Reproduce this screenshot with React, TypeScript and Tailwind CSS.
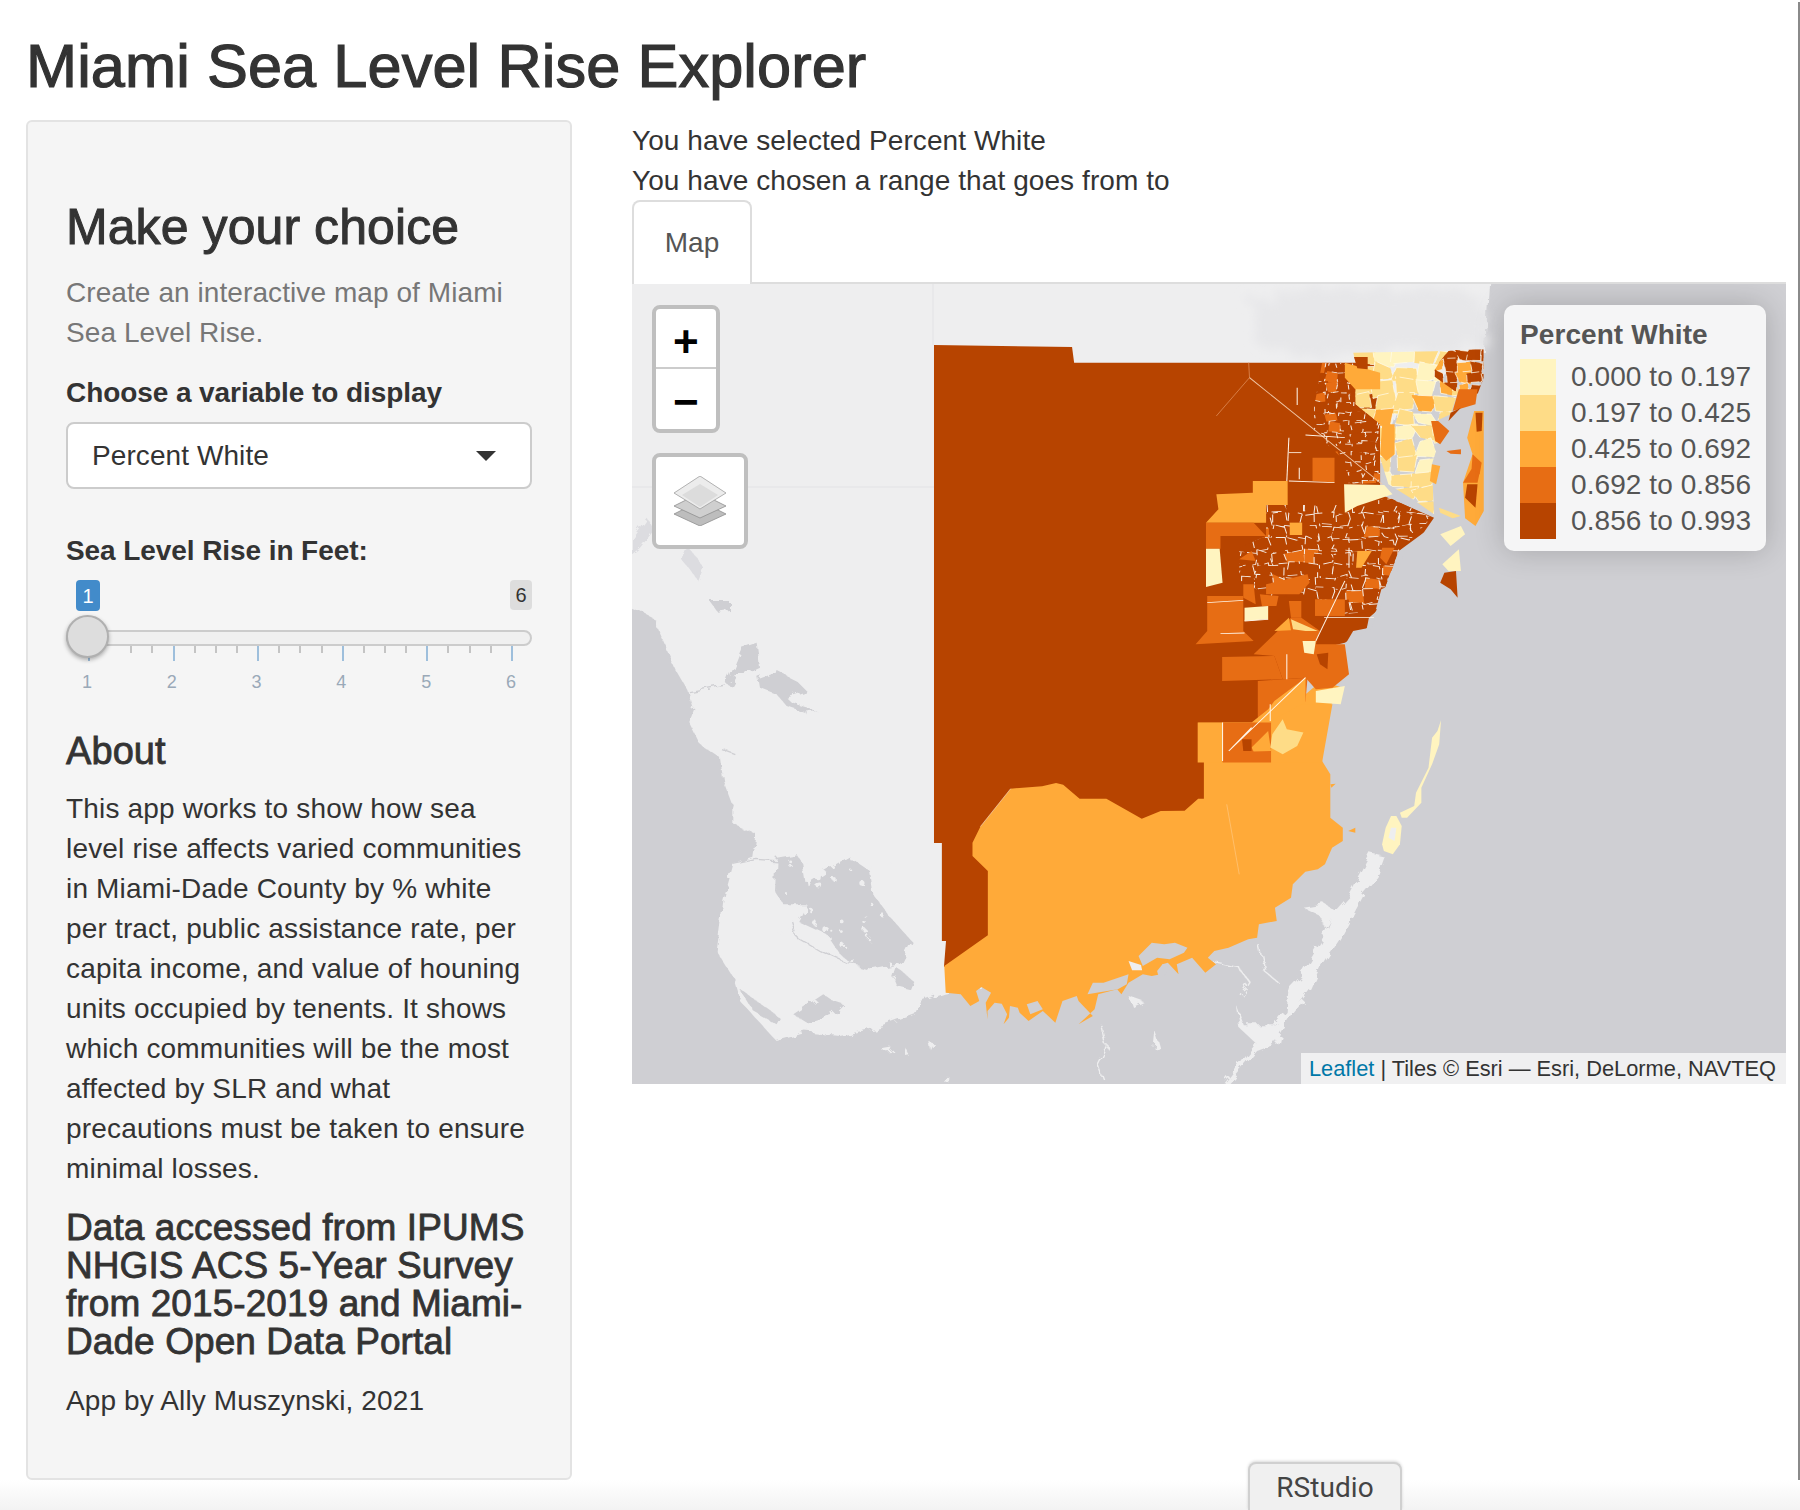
const D = '#b74400';
const M = '#e76d14';
const O = '#ffaa39';
const L = '#fedc87';
const P = '#fff4c0';
const WATER = '#cfcfd3';
const LAND = '#eeeeef';

// small seeded generator so the tract pattern stays the same on every render
let seed = 71;
const rnd = () => {
  seed = (seed * 16807) % 2147483647;
  return seed / 2147483647;
};

interface Tile {
  pts: string;
  fill: string;
}

const makeTiles = (
  x0: number,
  y0: number,
  x1: number,
  y1: number,
  w: number,
  h: number,
  palette: string[],
  wobble = 0.5,
): Tile[] => {
  const out: Tile[] = [];
  const j = () => (rnd() - 0.5) * w * wobble;
  const k = () => (rnd() - 0.5) * h * wobble;
  for (let y = y0; y < y1; y += h) {
    for (let x = x0; x < x1; x += w) {
      out.push({
        pts: `${x + j()},${y + k()} ${x + w + j()},${y + k()} ${x + w + j()},${y + h + k()} ${x + j()},${y + h + k()}`,
        fill: palette[Math.floor(rnd() * palette.length)],
      });
    }
  }
  return out;
};

const yellowTiles = makeTiles(490, 205, 745, 710, 50, 46, [P, L, L, L, P, L, L, O]);
const neTiles = makeTiles(680, 205, 810, 340, 30, 34, [D, D, D, M, O, D, D]);
const urbanTiles = makeTiles(215, 660, 690, 1010, 38, 38, [D, D, D, D, D, D, D, D, D, D, M]);
const northTiles = makeTiles(395, 245, 560, 610, 30, 30, [D, D, D, D, D, D, M]);

// pale flecks that break up the big lake
const lakeFlecks = Array.from({ length: 46 }, () => ({
  cx: 480 + rnd() * 390,
  cy: 770 + rnd() * 330,
  r: 3 + rnd() * 6,
}));

const blocks: [string, string][] = [
  [O, '470,245 555,275 555,325 495,325 470,290'],
  [D, '492,228 525,228 525,265 500,262'],
  [M, '392,530 445,530 445,605 392,600'],
  [O, '160,640 248,635 248,600 332,600 332,672 280,672 280,725 135,725 165,685'],
  [M, '135,725 250,725 280,765 170,765 170,803 135,803'],
  [P, '135,803 168,803 175,905 135,918'],
  [O, '337,725 367,725 367,762 337,762'],
  [P, '468,610 565,612 585,640 500,675 470,695'],
  [M, '138,945 225,945 225,1050 250,1080 110,1090 138,1050'],
  [M, '225,910 250,910 255,970 225,950'],
  [M, '215,835 245,810 255,840'],
  [M, '280,910 380,880 385,905 360,940 280,940'],
  [M, '265,940 310,945 305,975 270,975'],
  [P, '228,980 285,975 285,1015 228,1020'],
  [M, '335,960 365,960 365,1010 340,1010'],
  [M, '398,955 470,955 470,1005 398,1005'],
  [M, '250,1120 300,1060 340,1010 365,1010 410,1050 400,1090 470,1090 480,1180 440,1220 400,1225 375,1190 320,1195 300,1125'],
  [O, '300,1050 335,1010 340,1048'],
  [L, '340,1015 405,1050 375,1050 345,1045'],
  [P, '368,1080 400,1080 395,1120 372,1115'],
  [D, '402,1120 430,1115 428,1165 410,1150'],
  [M, '174,1128 300,1125 320,1195 174,1200'],
  [M, '260,1200 320,1195 380,1190 375,1262 260,1322'],
  [O, '115,1325 245,1325 300,1270 440,1270 415,1445 115,1445'],
  [O, '300,1260 375,1190 375,1265 250,1345'],
  [P, '400,1230 470,1215 460,1270 400,1265'],
  [M, '175,1325 245,1325 292,1325 292,1445 175,1445'],
  [O, '245,1400 285,1350 292,1410 250,1412'],
  [D, '222,1375 245,1375 245,1410 225,1410'],
  [L, '320,1315 330,1345 370,1355 355,1395 320,1420 290,1400 295,1360'],
  [O, '500,810 535,810 510,860 497,860'],
  [M, '560,800 590,800 570,850 555,830'],
  [M, '745,325 790,325 785,370 730,390'],
  [D, '725,395 750,380 720,420'],
  // orange edge of the pale zone along the bay
  [M, '678,420 695,420 722,450 700,490 688,480'],
  [O, '680,550 700,555 690,610 675,600'],
  [O, '560,430 590,430 590,520 570,540 555,520'],
  // the strip across the bay
  [O, '782,390 805,390 805,690 785,735 760,712 755,605 778,520 765,470'],
  [D, '785,395 802,395 800,450 788,452'],
  [M, '778,520 800,545 795,580 775,575'],
  [M, '755,605 775,565 795,575 790,605'],
  [D, '765,610 790,610 785,680 760,650'],
  [M, '715,510 750,505 750,520 725,518'],
  [L, '697,680 750,705 730,712 700,695'],
  [P, '700,760 750,735 760,760 725,795'],
  [P, '705,850 745,805 750,870 720,870'],
  [D, '700,905 710,875 738,870 742,950 725,925'],
];

// little bites out of the coast south of the city
const notches = [
  '600,810 618,800 608,835 590,842',
  '582,870 600,862 585,905 572,900',
  '558,925 575,915 555,985 545,985',
  '528,1010 552,985 532,1048 522,1048',
  '490,1050 530,1040 500,1075 470,1092',
  '660,755 690,742 668,770 640,780',
];

const cracks = [
  'M470 900 L400 1080',
  'M375 1190 L190 1410 L245 1340',
  'M355 320 L355 372',
  'M335 470 L330 600',
  'M335 515 L365 515',
  'M360 560 L360 595',
  'M335 600 L445 605',
  'M375 462 L470 470',
  'M138 965 L225 958',
  'M170 1058 L228 1056',
  'M228 1020 L285 1015',
  'M330 1120 L330 1195',
  'M290 1270 L290 1320',
  'M175 1325 L175 1440',
  'M420 1010 L540 1010',
  'M480 800 L480 860',
];

const MapArt = () => (
  <svg className="absolute inset-0 block h-full w-full" viewBox="632 283 1154 800" preserveAspectRatio="none">
    <rect x="632" y="283" width="1154" height="800" fill={WATER} />
    <defs>
      <filter id="rough" x="-5%" y="-5%" width="110%" height="110%">
        <feTurbulence type="fractalNoise" baseFrequency="0.085" numOctaves="3" seed="4" result="n" />
        <feDisplacementMap in="SourceGraphic" in2="n" scale="11" />
        <feGaussianBlur stdDeviation="0.7" />
      </filter>
      <filter id="relief" x="-10%" y="-10%" width="120%" height="120%">
        <feTurbulence type="fractalNoise" baseFrequency="0.05" numOctaves="3" seed="9" result="n" />
        <feDisplacementMap in="SourceGraphic" in2="n" scale="30" />
        <feGaussianBlur stdDeviation="5" />
      </filter>
      <clipPath id="yellowZone">
        <polygon points="490,215 720,210 700,260 690,290 745,325 725,400 690,420 700,470 680,550 685,700 640,660 575,610 555,530 555,430 495,370 495,330 500,260" />
      </clipPath>
      <clipPath id="neZone">
        <polygon points="720,210 750,205 805,205 805,290 790,340 735,330 690,290 680,280 700,240" />
      </clipPath>
      <clipPath id="urbanZone">
        <polygon points="280,672 450,672 560,640 680,710 600,810 582,870 545,990 470,1000 400,950 300,950 215,900 215,800 280,765" />
      </clipPath>
      <clipPath id="northZone">
        <polygon points="415,245 495,245 495,370 555,430 555,605 480,610 470,540 395,450 395,385" />
      </clipPath>
    </defs>

    {/* land and lakes, on the west side grid */}
    <g filter="url(#rough)">
      <g transform="translate(620 600) scale(0.3333)">
        <polygon
          fill={LAND}
          points="-60,-1050 2610,-1050 2592,-750 2340,-600 2040,300 2040,780 1500,1100 1100,1150 970,1175 900,1200 885,1240 790,1275 660,1305 560,1295 470,1320 360,1200 340,1130 290,1050 310,900 340,790 400,770 410,700 340,670 340,620 310,540 300,470 240,430 205,360 220,320 205,270 170,210 130,120 100,50 60,30 -60,-20"
        />
        <g fill={WATER}>
          <polygon points="270,0 330,0 330,30 295,35" />
          <polygon points="320,250 345,190 365,140 410,125 420,200 400,210 350,220 330,255" />
          <polygon points="415,230 470,210 530,240 560,270 500,290 520,310 590,330 560,335 500,315 470,280 420,260" />
          <polygon points="470,770 530,760 550,790 560,850 620,810 690,770 750,810 760,880 820,960 875,1020 840,1090 760,1105 700,1090 660,1060 620,1000 535,960 560,910 490,910 465,870" />
          <polygon points="820,1130 830,1100 880,1140 870,1165 830,1155" />
          <polygon points="520,1240 610,1180 640,1200 670,1210 640,1240 560,1265" />
          <polygon points="360,1165 480,1250 470,1270 400,1230" />
        </g>
        <g fill="#dcdce0">
          <polygon points="36,-190 80,-250 100,-210 60,-160 36,-140" />
          <polygon points="180,-130 215,-150 250,-100 235,-60 205,-100" />
        </g>
        <g fill={LAND}>
          {lakeFlecks.map((f, i) => (
            <circle key={i} cx={f.cx} cy={f.cy} r={f.r} />
          ))}
        </g>
        <g fill="none" stroke={WATER} strokeWidth="4">
          <path d="M210 275 L320 255" />
          <path d="M340 790 L410 775 L480 780" />
          <path d="M515 960 L530 1010 L600 1050 L680 1085 L740 1090" />
          <path d="M300 440 L340 455" />
        </g>
        <g fill={LAND}>
          <polygon points="785,1345 815,1340 810,1350 790,1352" />
          <polygon points="925,1320 940,1325 930,1345" />
          <polygon points="855,1340 865,1360 855,1362" />
          <polygon points="975,1425 985,1425 985,1445 975,1445" />
        </g>
      </g>

      {/* the keys, on the south grid */}
      <g transform="translate(900 680) scale(0.3571 0.3333)">
        <g fill={LAND}>
          <polygon points="1320,520 1360,530 1340,590 1300,640 1240,760 1180,860 1150,930 1100,1000 1050,1090 1000,1110 960,1160 920,1210 905,1205 960,1130 990,1090 1030,1060 1080,990 1085,920 1130,870 1180,780 1210,700 1260,640" />
          <polygon points="1130,680 1190,670 1220,690 1190,740 1170,700" />
          <polygon points="940,970 960,1030 1050,1030 1080,990 1060,1090 1010,1100 950,1040" />
          <polygon points="640,945 680,960 650,975" />
          <polygon points="715,1050 730,1105 710,1100" />
        </g>
        <g fill="none" stroke={LAND} strokeWidth="4">
          <path d="M565 1035 L578 1095 L552 1150 L565 1190" />
          <path d="M880 845 L950 860 L980 905 L955 945" />
          <path d="M1005 790 L1020 870 L1060 905" />
        </g>
      </g>
    </g>

    <g fill="none" stroke="#e6e6e8" strokeWidth="1.5">
      <path d="M632 486 L934 486" />
      <path d="M933 283 L933 344" />
    </g>

    {/* faint relief north of the county */}
    <g filter="url(#relief)">
      <g transform="translate(1150 280) scale(0.4146 0.3333)" fill="#e7e7e9">
        <polygon points="240,60 400,20 560,30 800,40 810,200 500,215 420,240 260,190" />
      </g>
    </g>

    {/* whole county base, on the north grid */}
    <g transform="translate(1150 280) scale(0.4146 0.3333)">
      <polygon
        fill={D}
        points="-521,192 -188,198 -183,245 415,245 555,245 555,640 685,710 660,755 600,810 582,870 545,990 520,1048 470,1085 420,1100 300,1330 262,1560 100,1900 -400,2050 -497,2058 -492,1980 -502,1980 -502,1686 -521,1686"
      />
    </g>

    <g transform="translate(900 680) scale(0.3571 0.3333)">
      <polygon
        fill={O}
        points="124,855 246,763 246,570 203,525 203,485 225,437 310,323 398,316 437,306 457,311 503,353 578,353 677,413 730,390 797,389 835,353 851,353 851,240 835,232 835,125 1040,125 1180,0 1240,20 1195,90 1182,150 1182,240 1205,280 1205,410 1240,440 1240,480 1210,500 1190,550 1170,565 1135,572 1100,610 1095,650 1050,680 1055,720 1005,730 1000,770 975,775 920,800 880,810 862,830 885,850 855,875 818,830 775,850 780,880 750,845 735,850 730,880 705,885 680,880 640,905 620,940 608,925 555,940 545,985 500,1030 540,1005 500,960 495,945 455,960 435,1025 400,990 360,1020 335,995 330,980 308,975 305,1010 290,1030 300,1000 285,968 265,965 245,990 245,1015 240,965 255,935 228,918 213,930 222,960 197,975 170,940 128,935"
      />
      <polygon fill={WATER} points="668,825 705,785 740,790 770,785 805,800 795,815 755,835 720,830 680,855" />
      <polygon fill={WATER} points="540,905 570,905 640,880 635,910 610,925 525,940" />
      <polygon fill={LAND} points="640,840 675,852 678,868 650,868" />
      <polygon fill={WATER} points="720,870 735,850 750,850 745,880 725,890" />
      <polygon fill={WATER} points="355,970 385,960 400,985 365,1000" />
      <path d="M915 370 L950 580" stroke="#ffc880" strokeWidth="2" fill="none" />
      <path d="M225 437 L310 323" stroke="#fff" strokeWidth="2" fill="none" opacity="0.7" />
      <polygon
        fill={P}
        points="1515,118 1510,190 1490,250 1460,320 1460,365 1420,410 1405,410 1400,395 1440,375 1445,335 1480,260 1490,170 1505,150"
      />
      <polygon fill={P} points="1375,405 1390,405 1405,435 1400,490 1380,520 1355,510 1350,490 1360,440" />
      <polygon fill={LAND} points="1375,440 1390,440 1385,480 1368,470" />
      <polygon fill={O} points="1255,450 1275,440 1275,455" />
      <polygon fill={O} points="1205,310 1220,308 1208,320" />
    </g>

    {/* tracts */}
    <g transform="translate(1150 280) scale(0.4146 0.3333)">
      <g clipPath="url(#yellowZone)">
        {yellowTiles.map((t, i) => (
          <polygon key={i} points={t.pts} fill={t.fill} stroke="#fffbe8" strokeWidth="2" strokeDasharray="34 14" strokeDashoffset={i * 13} />
        ))}
      </g>
      <g clipPath="url(#neZone)">
        {neTiles.map((t, i) => (
          <polygon key={i} points={t.pts} fill={t.fill} stroke="#fff3e0" strokeWidth="2" strokeDasharray="20 12" strokeDashoffset={i * 9} />
        ))}
      </g>
      <g clipPath="url(#urbanZone)">
        {urbanTiles.map((t, i) => (
          <polygon key={i} points={t.pts} fill={t.fill} stroke="#f6ece4" strokeWidth="2.5" strokeDasharray="24 22" strokeDashoffset={i * 13} />
        ))}
      </g>
      <g clipPath="url(#northZone)">
        {northTiles.map((t, i) => (
          <polygon key={i} points={t.pts} fill={t.fill} stroke="#f6ece4" strokeWidth="2.5" strokeDasharray="14 30" strokeDashoffset={i * 11} />
        ))}
      </g>
      {blocks.map(([fill, points], i) => (
        <polygon key={i} fill={fill} points={points} />
      ))}
      {notches.map((points, i) => (
        <polygon key={i} fill={WATER} points={points} />
      ))}
      <path d="M160 405 L240 290 L238 245" fill="none" stroke="#e0905c" strokeWidth="2" />
      <path d="M240 290 L560 610" fill="none" stroke="#f0c8a8" strokeWidth="2.5" />
      {cracks.map((d, i) => (
        <path key={i} d={d} fill="none" stroke="#fff6ea" strokeWidth="2.5" />
      ))}
    </g>
  </svg>
);

const legendRows = [
  { color: P, label: '0.000 to 0.197' },
  { color: L, label: '0.197 to 0.425' },
  { color: O, label: '0.425 to 0.692' },
  { color: M, label: '0.692 to 0.856' },
  { color: D, label: '0.856 to 0.993' },
];

const LayersIcon = () => (
  <svg width="52" height="50" viewBox="0 0 52 50">
    <polygon points="26,25 52,38 26,50 0,38" fill="#bdbdbd" stroke="#8f8f8f" strokeWidth="0.8" />
    <polygon points="26,17 52,30 26,42 0,30" fill="#cfcfcf" stroke="#8f8f8f" strokeWidth="0.8" />
    <polygon points="26,0 52,17 26,33 0,17" fill="#ececec" stroke="#a0a0a0" strokeWidth="0.8" />
    <polygon points="26,8 44,19 26,31 8,19" fill="#dcdcdc" />
  </svg>
);

const labels = [1, 2, 3, 4, 5, 6];
// one major tick, three minor, five times over, then the last major
const tickRow = Array.from({ length: 21 }, (_, i) => i % 4 === 0);

const Slider = () => (
  <div className="h-[130px] pt-[9px]">
    <div className="flex items-start justify-between pl-[10px]">
      <span className="flex h-[31px] w-[24px] items-center justify-center rounded-[4px] bg-[#428bca] text-[20px] text-white">
        1
      </span>
      <span className="flex h-[30px] w-[22px] items-center justify-center rounded-[4px] bg-[#dddddd] text-[20px] text-[#333]">
        6
      </span>
    </div>
    <div className="relative mt-[19px] h-[16px] rounded-full border-2 border-[#cccccc] bg-[#f0f0f0]">
      <div className="absolute -left-[2px] -top-[17px] h-[43px] w-[43px] rounded-full border-2 border-[#b0b0b0] bg-[#dddddd] shadow-[0_2px_4px_rgba(0,0,0,0.3)]" />
    </div>
    <div className="-mt-px flex items-start justify-between pl-[22px] pr-[19px]">
      {tickRow.map((major, i) =>
        major ? (
          <i key={i} className="h-[16px] w-[2px] bg-[#9ebfdc]" />
        ) : (
          <i key={i} className={i < 2 ? 'invisible h-[8px] w-[2px]' : 'h-[8px] w-[2px] bg-[#c4c4c4]'} />
        ),
      )}
    </div>
    <div className="mt-[10px] flex justify-between px-[6px] text-[18px] leading-[22px] text-[#9aa9b8]">
      {labels.map((n) => (
        <span key={n} className="w-[30px] text-center">
          {n}
        </span>
      ))}
    </div>
  </div>
);

export default function App() {
  return (
    <div className="relative h-[1510px] w-[1800px] overflow-hidden bg-white font-['Liberation_Sans',Arial,sans-serif] text-[28px] leading-[40px] tracking-[0.08px] text-[#333]">
      <h1 className="mb-[21px] ml-[26px] pt-[33px] text-[61.3px] leading-[66px] [-webkit-text-stroke:1.2px_#333]">
        Miami Sea Level Rise Explorer
      </h1>

      <div className="flex items-start">
        <aside className="ml-[26px] h-[1360px] w-[546px] rounded-[6px] border-2 border-[#e3e3e3] bg-[#f5f5f5] p-[38px]">
          <h2 className="mb-[18px] mt-[40px] text-[50px] leading-[55px] [-webkit-text-stroke:1px_#333]">
            Make your choice
          </h2>
          <p className="text-[#777]">Create an interactive map of Miami Sea Level Rise.</p>

          <div className="mt-[20px] font-bold tracking-[-0.08px]">Choose a variable to display</div>
          <div className="mt-[9px] flex h-[67px] items-center justify-between rounded-[8px] border-2 border-[#cccccc] bg-white pb-px pl-[24px] pr-[34px] pt-[2px]">
            <span>Percent White</span>
            <svg width="20" height="10" viewBox="0 0 20 10">
              <polygon points="0,0 20,0 10,10" fill="#333" />
            </svg>
          </div>

          <div className="mt-[42px] font-bold tracking-[-0.08px]">Sea Level Rise in Feet:</div>
          <Slider />

          <h4 className="mt-[30px] text-[38px] leading-[40px] [-webkit-text-stroke:0.8px_#333]">About</h4>
          <p className="mt-[18px] tracking-[0.17px]">
            This app works to show how sea level rise affects varied communities in Miami-Dade County by % white per
            tract, public assistance rate, per capita income, and value of houning units occupied by tenents. It shows
            which communities will be the most affected by SLR and what precautions must be taken to ensure minimal
            losses.
          </p>
          <h3 className="mt-[20px] text-[37px] leading-[38px] [-webkit-text-stroke:0.8px_#333]">
            Data accessed from IPUMS NHGIS ACS 5-Year Survey from 2015-2019 and Miami-Dade Open Data Portal
          </h3>
          <p className="mt-[20px] tracking-[0.12px]">App by Ally Muszynski, 2021</p>
        </aside>

        <main className="ml-[60px] w-[1154px] pt-px">
          <div>You have selected Percent White</div>
          <div>You have chosen a range that goes from to</div>
          <div className="relative z-10 -mb-[2px] -mt-px flex h-[84px] w-[120px] items-center justify-center rounded-t-[8px] border-2 border-b-0 border-[#dddddd] bg-white text-[#555]">
            Map
          </div>
          <div className="relative h-[802px] overflow-hidden border-t-2 border-[#dddddd]">
            <MapArt />

            <div className="absolute left-[20px] top-[21px] w-[68px] rounded-[8px] border-4 border-[#bfbfbf] bg-white">
              <div className="flex h-[60px] items-center justify-center border-b-2 border-[#cccccc] pt-[8px] text-[44px] font-bold leading-none text-black">
                +
              </div>
              <div className="flex h-[60px] items-center justify-center pt-[6px] text-[44px] font-bold leading-none text-black">
                −
              </div>
            </div>

            <div className="absolute left-[20px] top-[169px] flex h-[96px] w-[96px] items-center justify-center rounded-[8px] border-4 border-[#bfbfbf] bg-white">
              <LayersIcon />
            </div>

            <div className="absolute right-[20px] top-[21px] w-[262px] rounded-[10px] bg-[#f5f5f6] pb-[12px] pl-[16px] pt-[10px] shadow-[0_0_30px_rgba(0,0,0,0.2)]">
              <div className="mb-[4px] font-bold leading-[40px] text-[#555]">Percent White</div>
              {legendRows.map((r) => (
                <div key={r.label} className="flex h-[36px] items-center gap-[15px] whitespace-nowrap leading-[36px] text-[#555]">
                  <span className="h-[36px] w-[36px]" style={{ background: r.color }} />
                  <span>{r.label}</span>
                </div>
              ))}
            </div>

            <div className="absolute bottom-0 right-0 flex h-[31px] w-[485px] items-center justify-end whitespace-nowrap bg-[#f0f0f1] pr-[10px] text-[21.8px] tracking-normal text-[#333]">
              <span className="text-[#0078a8]">Leaflet</span>&nbsp;| Tiles © Esri — Esri, DeLorme, NAVTEQ
            </div>
          </div>
        </main>
      </div>

      <div className="absolute right-0 top-[2px] h-[1493px] w-[2px] bg-[#8a8a8a]" />
      <div className="absolute bottom-0 left-0 right-0 h-[30px] bg-gradient-to-b from-white to-[#f3f3f3]" />
      <div className="absolute bottom-0 left-[1248px] flex h-[48px] w-[154px] items-center justify-center rounded-t-[8px] border-2 border-b-0 border-[#d0d0d0] bg-[#f0f0f0] pt-[2px] font-['Roboto',sans-serif] text-[28px] text-[#444] shadow-[0_-1px_3px_rgba(0,0,0,0.15)]">
        RStudio
      </div>
    </div>
  );
}
